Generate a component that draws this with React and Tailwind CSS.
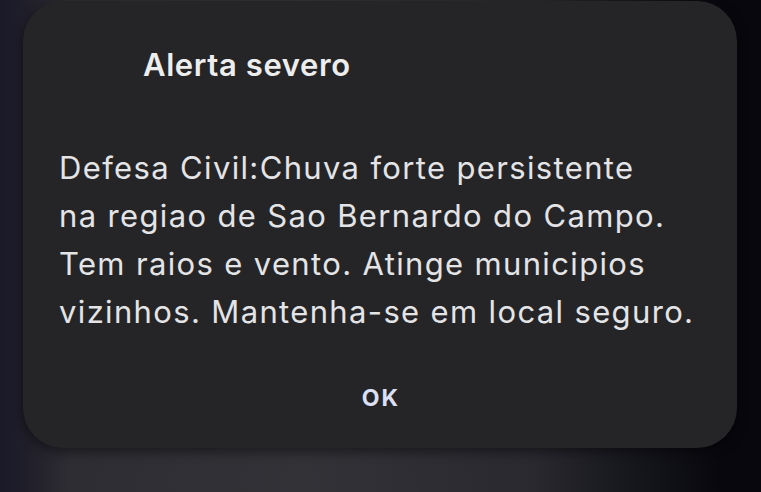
import React from "react";

export default function App() {
  return (
    <div
      className="relative h-[492px] w-[761px] overflow-hidden bg-[linear-gradient(90deg,#1b1a2a_0%,#1e1d29_3%,#2e2d33_9%,#333237_40%,#2a2930_70%,#15151c_84%,#07070d_95%)]"
      style={{ fontFamily: "Inter, Roboto, sans-serif" }}
    >
      {/* Alert dialog */}
      <div className="ml-[23px] mt-[1px] flex h-[447px] w-[714px] flex-col rounded-[40px] bg-[#252527] shadow-[0_4px_12px_rgba(0,0,0,0.45)]">
        <h1 className="mt-[46px] pl-[120px] text-[31px] leading-[36px] font-semibold tracking-[0.6px] text-[#ededee]">
          Alerta severo
        </h1>

        <p className="mt-[61px] pl-[36px] text-[31px] leading-[48px] tracking-[1.35px] whitespace-nowrap text-[#e4e4e6]">
          Defesa Civil:Chuva forte persistente
          <br />
          na regiao de Sao Bernardo do Campo.
          <br />
          Tem raios e vento. Atinge municipios
          <br />
          vizinhos. Mantenha-se em local seguro.
        </p>

        <div className="mt-[49px] flex justify-center">
          <button className="pl-[2px] text-[23px] leading-[27px] font-bold tracking-[2px] text-[#dce0f7]">
            OK
          </button>
        </div>
      </div>
    </div>
  );
}
